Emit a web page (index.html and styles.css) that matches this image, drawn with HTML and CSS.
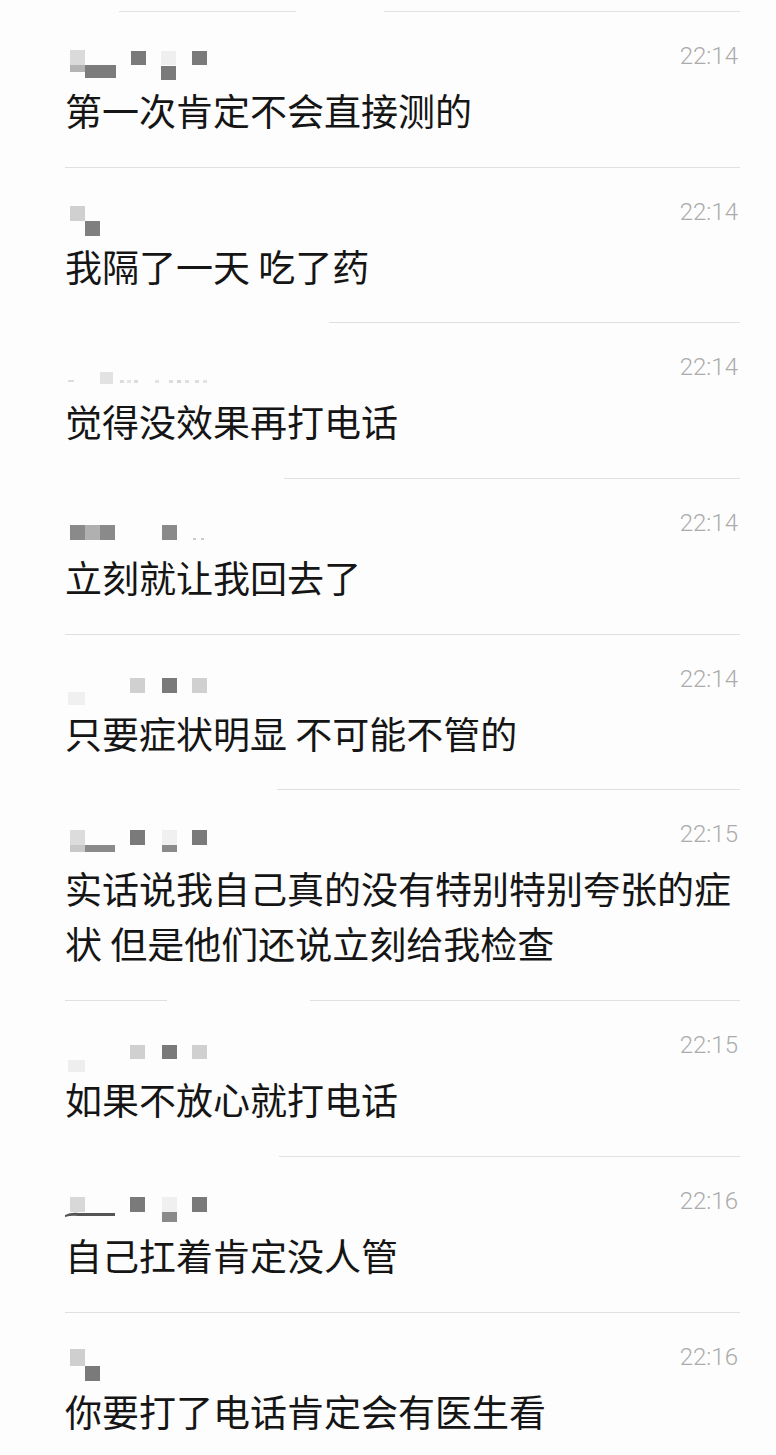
FILE: index.html
```html
<!DOCTYPE html>
<html lang="zh-CN">
<head>
    <meta charset="UTF-8">
    <meta name="viewport" content="width=device-width, initial-scale=1.0">
    <title>聊天记录</title>
    <link rel="stylesheet" href="styles.css">
</head>
<body>
    <div class="chat-list">

        <!-- row 1 -->
        <div class="rule rule-split">
            <span class="seg seg-a"></span>
            <span class="seg seg-b"></span>
        </div>
        <div class="msg">
            <div class="msg-head">
                <svg class="mosaic" width="150" height="40" viewBox="0 0 150 40">
                    <rect x="5" y="14" width="15" height="15" fill="#dadada"/>
                    <rect x="5" y="29" width="46" height="7" fill="#b4b4b4"/>
                    <rect x="20" y="29" width="31" height="13" fill="#7c7c7c"/>
                    <rect x="66" y="15" width="15" height="14" fill="#7a7a7a"/>
                    <rect x="96" y="15" width="15" height="14" fill="#efefef"/>
                    <rect x="96" y="30" width="15" height="14" fill="#7a7a7a"/>
                    <rect x="127" y="15" width="15" height="14" fill="#7a7a7a"/>
                </svg>
                <span class="time">22:14</span>
            </div>
            <p class="text">第一次肯定不会直接测的</p>
        </div>

        <!-- row 2 -->
        <div class="rule"></div>
        <div class="msg">
            <div class="msg-head">
                <svg class="mosaic" width="150" height="40" viewBox="0 0 150 40">
                    <rect x="5" y="14" width="15" height="15" fill="#d0d0d0"/>
                    <rect x="20" y="29" width="15" height="15" fill="#7f7f7f"/>
                </svg>
                <span class="time">22:14</span>
            </div>
            <p class="text">我隔了一天 吃了药</p>
        </div>

        <!-- row 3 -->
        <div class="rule rule-cut-a"></div>
        <div class="msg">
            <div class="msg-head">
                <svg class="mosaic" width="150" height="40" viewBox="0 0 150 40">
                    <rect x="3" y="33" width="6" height="2" fill="#dcdcdc"/>
                    <rect x="35" y="25" width="13" height="12" fill="#e2e2e2"/>
                    <rect x="55" y="33" width="4" height="3" fill="#dddddd"/>
                    <rect x="62" y="33" width="4" height="3" fill="#e4e4e4"/>
                    <rect x="69" y="33" width="4" height="3" fill="#dddddd"/>
                    <rect x="90" y="33" width="4" height="3" fill="#e4e4e4"/>
                    <rect x="104" y="33" width="4" height="3" fill="#dddddd"/>
                    <rect x="112" y="33" width="4" height="3" fill="#d8d8d8"/>
                    <rect x="120" y="33" width="4" height="3" fill="#e0e0e0"/>
                    <rect x="130" y="33" width="4" height="3" fill="#dddddd"/>
                    <rect x="138" y="33" width="4" height="3" fill="#e4e4e4"/>
                </svg>
                <span class="time">22:14</span>
            </div>
            <p class="text">觉得没效果再打电话</p>
        </div>

        <!-- row 4 -->
        <div class="rule rule-cut-b"></div>
        <div class="msg">
            <div class="msg-head">
                <svg class="mosaic" width="150" height="40" viewBox="0 0 150 40">
                    <rect x="5" y="22" width="15" height="15" fill="#8a8a8a"/>
                    <rect x="20" y="22" width="15" height="15" fill="#b0b0b0"/>
                    <rect x="35" y="22" width="15" height="15" fill="#8a8a8a"/>
                    <rect x="97" y="22" width="15" height="15" fill="#8a8a8a"/>
                    <rect x="128" y="35" width="3" height="2" fill="#cccccc"/>
                    <rect x="136" y="35" width="3" height="2" fill="#cccccc"/>
                </svg>
                <span class="time">22:14</span>
            </div>
            <p class="text">立刻就让我回去了</p>
        </div>

        <!-- row 5 -->
        <div class="rule"></div>
        <div class="msg">
            <div class="msg-head">
                <svg class="mosaic" width="150" height="40" viewBox="0 0 150 40">
                    <rect x="3" y="33" width="17" height="13" fill="#f0f0f0"/>
                    <rect x="65" y="19" width="15" height="15" fill="#d0d0d0"/>
                    <rect x="97" y="19" width="15" height="15" fill="#7a7a7a"/>
                    <rect x="127" y="19" width="15" height="15" fill="#d0d0d0"/>
                </svg>
                <span class="time">22:14</span>
            </div>
            <p class="text">只要症状明显 不可能不管的</p>
        </div>

        <!-- row 6 -->
        <div class="rule rule-cut-c"></div>
        <div class="msg">
            <div class="msg-head">
                <svg class="mosaic" width="150" height="40" viewBox="0 0 150 40">
                    <rect x="5" y="16" width="15" height="15" fill="#dcdcdc"/>
                    <rect x="5" y="31" width="15" height="7" fill="#c8c8c8"/>
                    <rect x="20" y="31" width="30" height="7" fill="#8a8a8a"/>
                    <rect x="65" y="16" width="15" height="15" fill="#7a7a7a"/>
                    <rect x="97" y="16" width="15" height="15" fill="#f0f0f0"/>
                    <rect x="97" y="31" width="15" height="7" fill="#8a8a8a"/>
                    <rect x="127" y="16" width="15" height="15" fill="#7a7a7a"/>
                </svg>
                <span class="time">22:15</span>
            </div>
            <p class="text">实话说我自己真的没有特别特别夸张的症状 但是他们还说立刻给我检查</p>
        </div>

        <!-- row 7 -->
        <div class="rule rule-split">
            <span class="seg seg-c"></span>
            <span class="seg seg-d"></span>
        </div>
        <div class="msg">
            <div class="msg-head">
                <svg class="mosaic" width="150" height="40" viewBox="0 0 150 40">
                    <rect x="3" y="35" width="17" height="12" fill="#eeeeee"/>
                    <rect x="65" y="20" width="15" height="14" fill="#d0d0d0"/>
                    <rect x="97" y="20" width="15" height="14" fill="#7a7a7a"/>
                    <rect x="127" y="20" width="15" height="14" fill="#d0d0d0"/>
                </svg>
                <span class="time">22:15</span>
            </div>
            <p class="text">如果不放心就打电话</p>
        </div>

        <!-- row 8 -->
        <div class="rule rule-cut-d"></div>
        <div class="msg">
            <div class="msg-head">
                <svg class="mosaic" width="150" height="40" viewBox="0 0 150 40">
                    <rect x="5" y="16" width="15" height="15" fill="#d8d8d8"/>
                    <path d="M0 34 Q6 31 14 32 L50 32 L50 35 L14 35 Q6 34 0 36 Z" fill="#555555"/>
                    <rect x="65" y="16" width="15" height="15" fill="#7a7a7a"/>
                    <rect x="97" y="16" width="15" height="15" fill="#f0f0f0"/>
                    <rect x="97" y="31" width="15" height="10" fill="#8a8a8a"/>
                    <rect x="127" y="16" width="15" height="15" fill="#7a7a7a"/>
                </svg>
                <span class="time">22:16</span>
            </div>
            <p class="text">自己扛着肯定没人管</p>
        </div>

        <!-- row 9 -->
        <div class="rule"></div>
        <div class="msg">
            <div class="msg-head">
                <svg class="mosaic" width="150" height="40" viewBox="0 0 150 40">
                    <rect x="5" y="12" width="15" height="17" fill="#cfcfcf"/>
                    <rect x="20" y="29" width="15" height="15" fill="#7a7a7a"/>
                </svg>
                <span class="time">22:16</span>
            </div>
            <p class="text">你要打了电话肯定会有医生看</p>
        </div>

    </div>
</body>
</html>
```

FILE: styles.css
```css
/* Reset and basic layout */
* {
    margin: 0;
    padding: 0;
    box-sizing: border-box;
}

body {
    background-color: #fdfdfd;
    font-family: "Noto Sans CJK SC", "Noto Sans", sans-serif;
    color: #111;
    overflow: hidden;
}

.chat-list {
    padding: 11px 36px 0 65px;
}

/* Dividers between messages */
.rule {
    height: 1px;
    background-color: #e0e0e0;
}

.rule-cut-a { margin-left: 264px; }
.rule-cut-b { margin-left: 219px; }
.rule-cut-c { margin-left: 212px; }
.rule-cut-d { margin-left: 214px; }

.rule-split {
    display: flex;
    background-color: transparent;
}

.seg {
    height: 1px;
    background-color: #e0e0e0;
}

.seg-a { margin-left: 54px; width: 177px; }
.seg-b { margin-left: 88px; flex: 1; }
.seg-c { width: 102px; }
.seg-d { margin-left: 143px; flex: 1; }

/* One message */
.msg {
    padding: 24px 0 28.7px;
}

.msg-head {
    display: flex;
    justify-content: space-between;
    align-items: center;
    height: 40px;
    margin-bottom: 7px;
}

.mosaic {
    display: block;
    overflow: visible;
}

.time {
    font-family: Roboto, "Liberation Sans", sans-serif;
    font-weight: 300;
    font-size: 24px;
    line-height: 40px;
    color: #ababab;
    margin-right: 2px;
}

.text {
    font-size: 37px;
    line-height: 55px;
    font-weight: 400;
    color: #151515;
}
```
